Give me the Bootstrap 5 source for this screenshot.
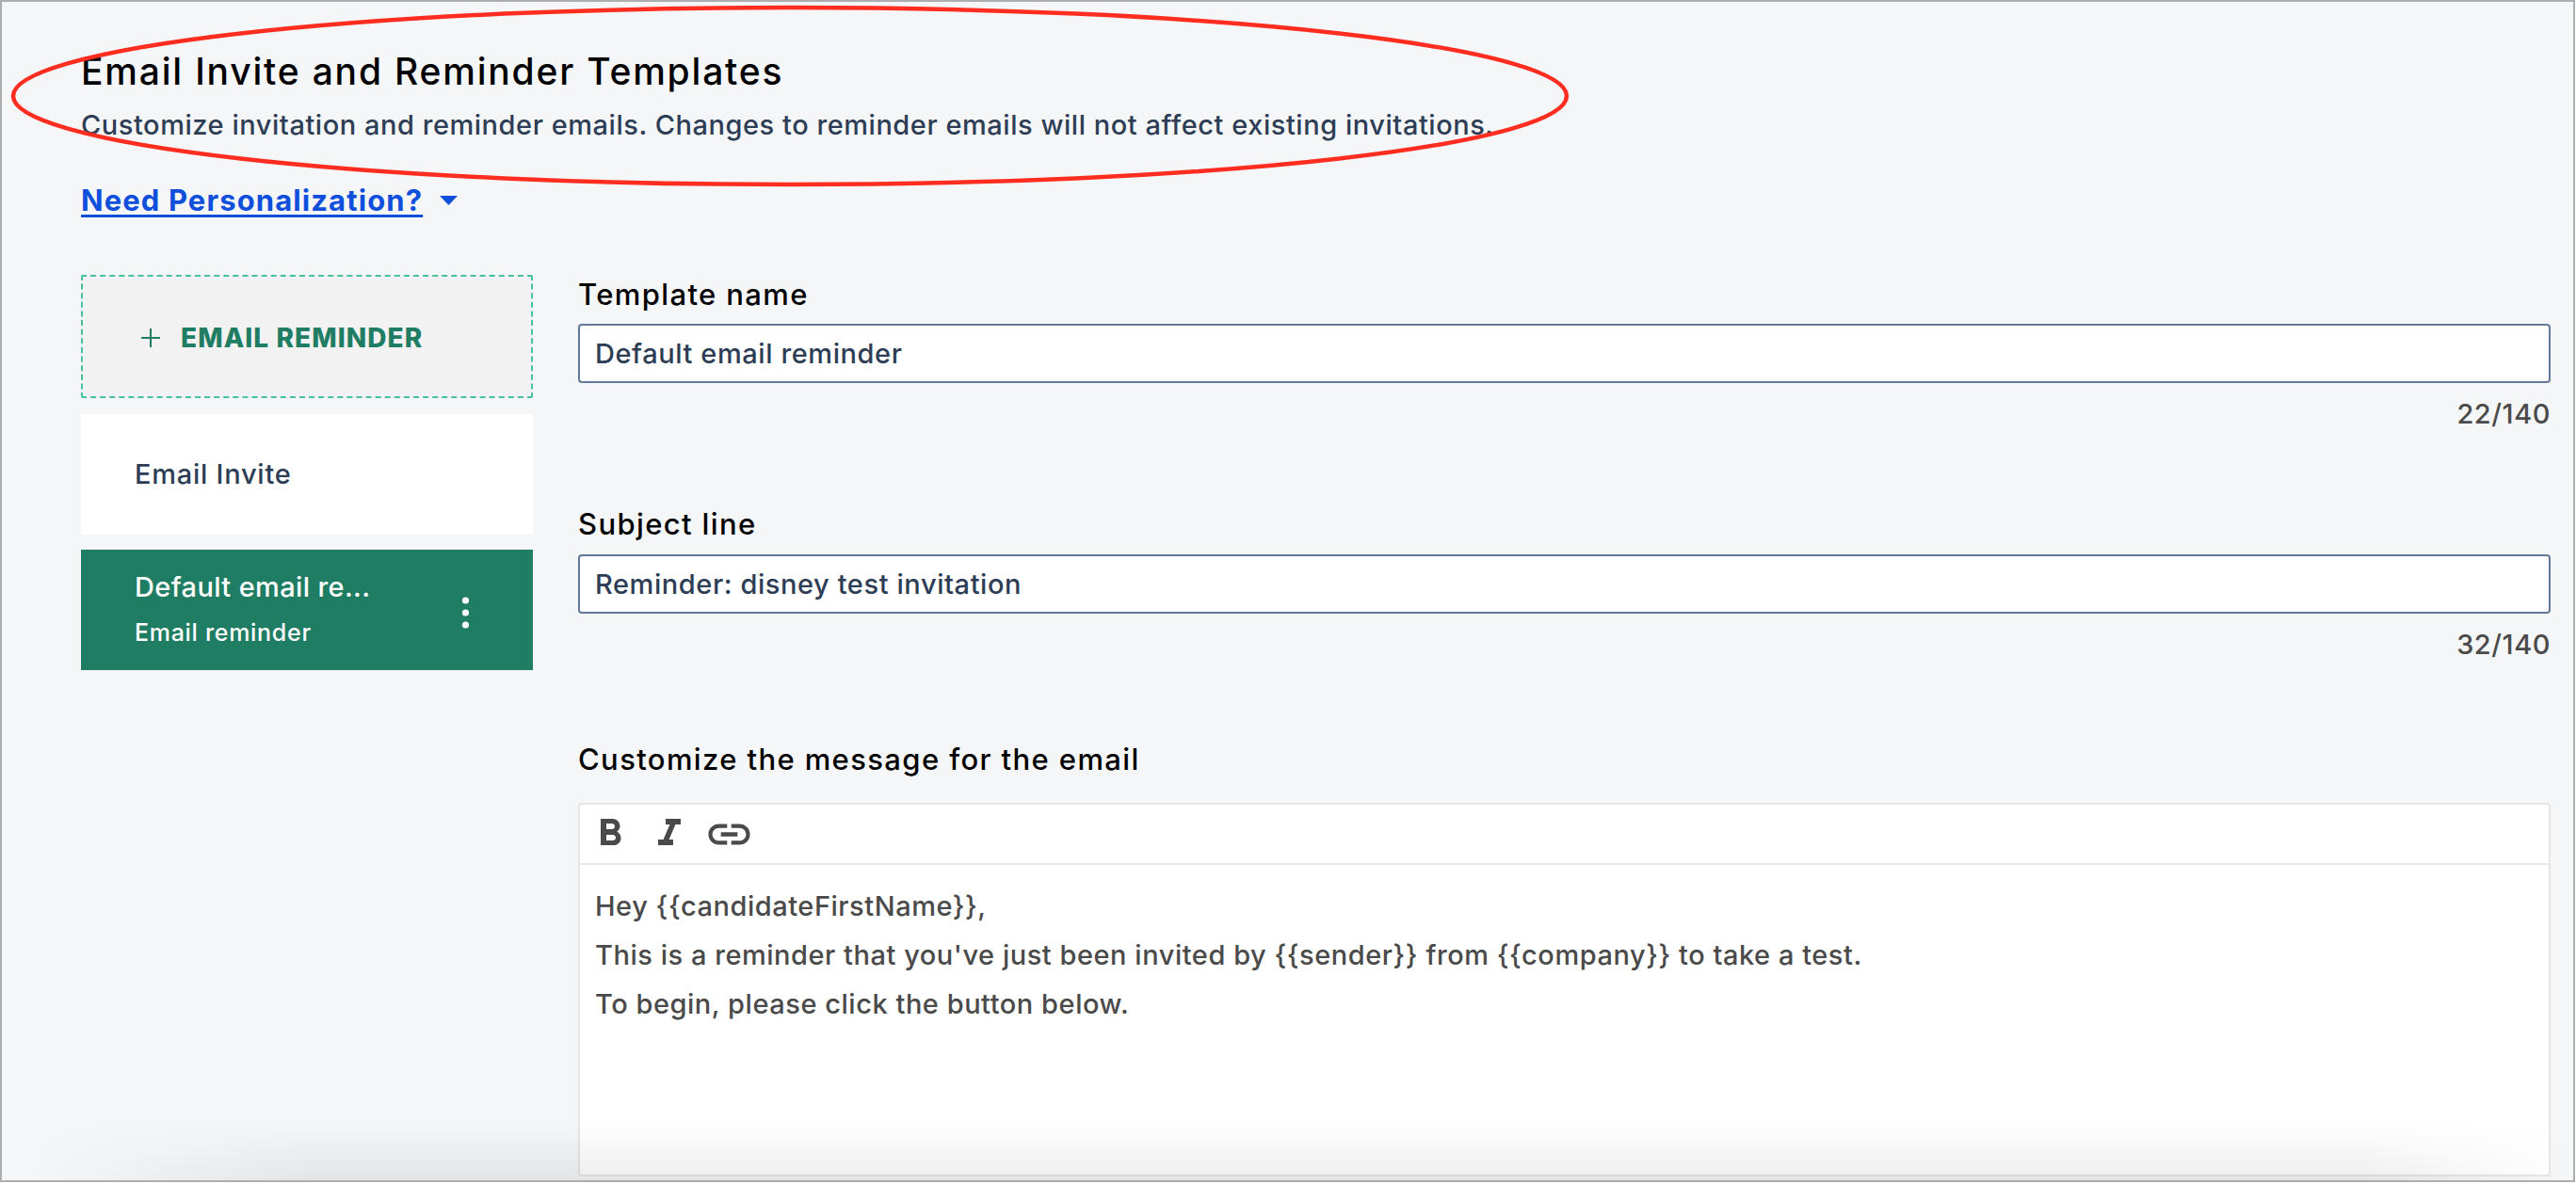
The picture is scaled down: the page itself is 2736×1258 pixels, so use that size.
<!DOCTYPE html>
<html lang="en">
<head>
<meta charset="utf-8">
<title>Email Invite and Reminder Templates</title>
<link href="https://cdn.jsdelivr.net/npm/bootstrap@5.3.0/dist/css/bootstrap.min.css" rel="stylesheet">
<style>
html,body{height:100%;margin:0;overflow:hidden;background:#fff}
body{font-family:Inter,"Liberation Sans",sans-serif}
.frame{position:relative;width:2735px;height:1256px;background:#f5f6f8;border:2px solid #aeaeb0;padding:52px 24px 0 84px;overflow:hidden}
.page-title{font-size:39px;line-height:44px;font-weight:500;color:#000;margin:0 0 15px;letter-spacing:1.8px}
.page-sub{font-size:29px;line-height:40px;font-weight:450;color:#2d3d55;margin:0 0 40px;letter-spacing:.54px}
.pers-link{font-size:31px;line-height:40px;font-weight:700;color:#0f4fdb;text-decoration:underline;text-underline-offset:4px;letter-spacing:1.1px}
.pers-caret{width:19px;height:10px;margin-left:18px}
.main-row{margin-top:59px;gap:48px}
.side-col{width:480px;flex:none}
.add-tile{height:131px;background:#f2f2f2;border:2px dashed #46c19f;border-radius:2px;padding:2px 0 0 62px;color:#1f7d63;font-size:28px;font-weight:800;letter-spacing:1.07px}
.add-plus{width:20px;height:20px;margin-right:22px}
.tpl-tile{height:128px;padding:0 26px 0 57px;font-size:29px;font-weight:450;letter-spacing:.75px}
.tpl-plain{background:#fff;color:#2d3d55;margin-top:17px}
.tpl-active{background:#1f7d63;color:#fff;margin-top:16px}
.tpl-name{line-height:40px;margin-top:-5px;letter-spacing:.37px}
.tpl-type{font-size:25px;line-height:32px;margin-top:12px;letter-spacing:.7px}
.kebab{width:9px;height:34px;margin-left:auto;margin-right:41px;margin-top:6px}
.form-col{flex:1;min-width:0}
.fld-label{display:block;font-size:31px;line-height:40px;font-weight:500;color:#000;margin:1px 0 11px;letter-spacing:1.38px}
.fld-input.form-control{height:63px;border:2px solid #64789a;border-radius:4px;font-size:29px;font-weight:450;color:#2d3d55;padding:0 16px;letter-spacing:.58px;background:#fff;box-shadow:none}
.fld-count{font-size:29px;line-height:40px;font-weight:450;color:#4a4a4a;text-align:right;margin-top:13px;letter-spacing:.55px}
.fld-gap{margin-top:77px;margin-bottom:12px}
.msg-gap{margin-top:82px}
.msg-label{margin-bottom:26px}
.editor{height:397px;background:#fff;border:2px solid #e6e6e6;border-radius:4px;overflow:hidden}
.ed-bar{height:64px;border-bottom:2px solid #e8e8e8;padding:7px 0 0 8px;gap:15px;color:#4a4a4a}
.ed-ico{width:48px;height:48px;fill:#4a4a4a}
.ed-link{width:53px;height:53px;margin-top:-2px;margin-left:-2px}
.ed-body{padding:18px 16px;font-size:29px;line-height:52px;font-weight:450;color:#4a4a4a;letter-spacing:.53px}
.ed-body p{margin:0}
.oval{position:absolute;left:9px;top:1px;width:1664px;height:198px;pointer-events:none}
.fade-bottom{position:absolute;left:0;right:0;bottom:0;height:62px;pointer-events:none;background:linear-gradient(to bottom,rgba(0,0,0,0),rgba(0,0,0,.065));-webkit-mask-image:linear-gradient(to right,transparent 1%,#000 12%,#000 92%,transparent 100%);mask-image:linear-gradient(to right,transparent 1%,#000 12%,#000 92%,transparent 100%)}
</style>
</head>
<body>
<div class="frame">
  <h1 class="page-title">Email Invite and Reminder Templates</h1>
  <p class="page-sub">Customize invitation and reminder emails. Changes to reminder emails will not affect existing invitations.</p>
  <div class="d-flex align-items-center">
    <a class="pers-link" href="#">Need Personalization?</a>
    <svg class="pers-caret" viewBox="0 0 19 10" aria-hidden="true"><path d="M0 0h19L9.5 10z" fill="#0f4fdb"/></svg>
  </div>
  <div class="d-flex main-row">
    <div class="side-col">
      <div class="add-tile d-flex align-items-center">
        <svg class="add-plus" viewBox="0 0 20 20" aria-hidden="true"><path d="M10 0v20M0 10h20" stroke="#1f7d63" stroke-width="2" fill="none"/></svg>
        <span>EMAIL REMINDER</span>
      </div>
      <div class="tpl-tile tpl-plain d-flex align-items-center">Email Invite</div>
      <div class="tpl-tile tpl-active d-flex align-items-center">
        <div>
          <div class="tpl-name">Default email re...</div>
          <div class="tpl-type">Email reminder</div>
        </div>
        <svg class="kebab" viewBox="0 0 9 34" aria-hidden="true"><circle cx="4.5" cy="4" r="3.6" fill="#fff"/><circle cx="4.5" cy="17" r="3.6" fill="#fff"/><circle cx="4.5" cy="30" r="3.6" fill="#fff"/></svg>
      </div>
    </div>
    <div class="form-col">
      <label class="fld-label">Template name</label>
      <input class="form-control fld-input" type="text" value="Default email reminder">
      <div class="fld-count">22/140</div>
      <label class="fld-label fld-gap">Subject line</label>
      <input class="form-control fld-input" type="text" value="Reminder: disney test invitation">
      <div class="fld-count">32/140</div>
      <label class="fld-label msg-gap msg-label">Customize the message for the email</label>
      <div class="editor">
        <div class="ed-bar d-flex align-items-start">
          <svg class="ed-ico" viewBox="0 0 24 24" aria-hidden="true"><path d="M15.6 10.79c.97-.67 1.65-1.77 1.65-2.79 0-2.26-1.75-4-4-4H7v14h7.04c2.09 0 3.71-1.7 3.71-3.79 0-1.52-.86-2.82-2.15-3.42zM10 6.5h3c.83 0 1.5.67 1.5 1.5s-.67 1.5-1.5 1.5h-3v-3zm3.5 9H10v-3h3.5c.83 0 1.5.67 1.5 1.5s-.67 1.5-1.5 1.5z"/></svg>
          <svg class="ed-ico" viewBox="0 0 24 24" aria-hidden="true"><path d="M10 4v3h2.21l-3.42 8H6v3h8v-3h-2.21l3.42-8H18V4z"/></svg>
          <svg class="ed-ico ed-link" viewBox="0 0 24 24" aria-hidden="true"><path d="M3.9 12c0-1.71 1.39-3.1 3.1-3.1h4V7H7c-2.76 0-5 2.24-5 5s2.24 5 5 5h4v-1.9H7c-1.71 0-3.1-1.39-3.1-3.1zM8 13h8v-2H8v2zm9-6h-4v1.9h4c1.71 0 3.1 1.39 3.1 3.1s-1.39 3.1-3.1 3.1h-4V17h4c2.76 0 5-2.24 5-5s-2.24-5-5-5z"/></svg>
        </div>
        <div class="ed-body">
          <p>Hey {{candidateFirstName}},</p>
          <p>This is a reminder that you've just been invited by {{sender}} from {{company}} to take a test.</p>
          <p>To begin, please click the button below.</p>
        </div>
      </div>
    </div>
  </div>
  <svg class="oval" viewBox="0 0 1664 198" aria-hidden="true"><ellipse cx="828" cy="99" rx="825" ry="94" fill="none" stroke="#ff2d20" stroke-width="4.5"/></svg>
  <div class="fade-bottom"></div>
</div>
<script src="https://cdn.jsdelivr.net/npm/bootstrap@5.3.0/dist/js/bootstrap.bundle.min.js"></script>
</body>
</html>
